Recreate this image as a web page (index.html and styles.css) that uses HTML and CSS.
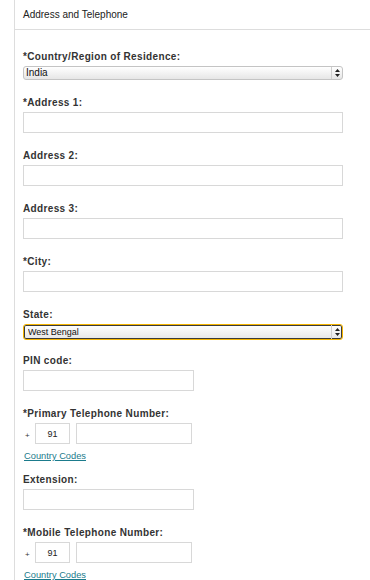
FILE: index.html
```html
<!DOCTYPE html>
<html lang="en">
<head>
    <meta charset="UTF-8">
    <meta name="viewport" content="width=device-width, initial-scale=1.0">
    <title>Address and Telephone</title>
    <link rel="stylesheet" href="styles.css">
</head>
<body>

    <div class="panel">
        <div class="panel-head">Address and Telephone</div>

        <form class="address-form">
            <div class="field">
                <label>*Country/Region of Residence:</label>
                <div class="select-box">
                    <select><option>India</option></select>
                    <span class="select-arrows">
                        <svg width="5" height="8" viewBox="0 0 5 8"><path d="M2.5 0L5 3H0z M0 5h5L2.5 8z" fill="#222"/></svg>
                    </span>
                </div>
            </div>

            <div class="field">
                <label>*Address 1:</label>
                <input type="text" class="text-input">
            </div>

            <div class="field">
                <label>Address 2:</label>
                <input type="text" class="text-input">
            </div>

            <div class="field">
                <label>Address 3:</label>
                <input type="text" class="text-input">
            </div>

            <div class="field">
                <label>*City:</label>
                <input type="text" class="text-input">
            </div>

            <div class="field state-field">
                <label>State:</label>
                <div class="select-box focused">
                    <select class="small"><option>West Bengal</option></select>
                    <span class="select-arrows">
                        <svg width="5" height="8" viewBox="0 0 5 8"><path d="M2.5 0L5 3H0z M0 5h5L2.5 8z" fill="#222"/></svg>
                    </span>
                </div>
            </div>

            <div class="field">
                <label>PIN code:</label>
                <input type="text" class="text-input short">
            </div>

            <div class="field with-link">
                <label>*Primary Telephone Number:</label>
                <div class="phone-row">
                    <span class="plus">+</span>
                    <input type="text" class="text-input code" value="91">
                    <input type="text" class="text-input number">
                </div>
                <a href="#" class="codes-link">Country Codes</a>
            </div>

            <div class="field">
                <label>Extension:</label>
                <input type="text" class="text-input short">
            </div>

            <div class="field with-link">
                <label>*Mobile Telephone Number:</label>
                <div class="phone-row">
                    <span class="plus">+</span>
                    <input type="text" class="text-input code" value="91">
                    <input type="text" class="text-input number">
                </div>
                <a href="#" class="codes-link">Country Codes</a>
            </div>
        </form>
    </div>

</body>
</html>
```

FILE: styles.css
```css
*{
    box-sizing: border-box;
}
body{
    margin: 0;
    background: #fff;
    font-family: "Liberation Sans", Arial, sans-serif;
    color: #333;
}
.panel{
    margin-left: 14px;
    border-left: 1px solid #ddd;
    min-height: 100vh;
}
.panel-head{
    padding: 9px 8px 8px;
    line-height: 12px;
    font-size: 10px;
    color: #222;
    border-bottom: 1px solid #ddd;
}
.address-form{
    padding: 21px 8px 0;
}
.field{
    margin-bottom: 17px;
}
.field.state-field{
    margin-bottom: 15px;
}
.field.with-link{
    margin-bottom: 12px;
}
.field label{
    display: block;
    font-size: 10px;
    font-weight: bold;
    letter-spacing: 0.35px;
    line-height: 12px;
    margin-bottom: 3px;
    color: #333;
}
.text-input{
    display: block;
    width: 320px;
    height: 21px;
    border: 1px solid #d8d8d8;
    background: #fff;
    font-family: "Liberation Sans", Arial, sans-serif;
    font-size: 9px;
    color: #222;
    padding: 0 4px;
    outline: none;
}
.text-input.short{
    width: 171px;
}

/* select boxes */
.select-box{
    display: flex;
    width: 320px;
    height: 14px;
    border: 1px solid #c4c4c4;
    border-radius: 3px;
    background: linear-gradient(#ffffff, #e6e6e6);
}
.select-box select{
    flex: 1;
    appearance: none;
    -webkit-appearance: none;
    border: 0;
    background: transparent;
    font-family: "Liberation Sans", Arial, sans-serif;
    font-size: 10px;
    line-height: 12px;
    padding: 0 2px;
    color: #111;
    outline: none;
}
.select-box select.small{
    font-size: 9px;
    padding-left: 4px;
}
.select-arrows{
    width: 11px;
    border-left: 1px solid #cfcfcf;
    display: flex;
    align-items: center;
    justify-content: center;
}
.select-box.focused{
    height: 16px;
    border-color: #f4b400;
    box-shadow: inset 0 0 0 1px #3a3a3a;
}

/* phone */
.phone-row{
    display: flex;
    align-items: center;
}
.plus{
    width: 12px;
    padding-left: 2px;
    padding-top: 4px;
    font-size: 8px;
    color: #333;
}
.text-input.code{
    width: 35px;
    margin-right: 6px;
    text-align: center;
}
.text-input.number{
    width: 116px;
}
.codes-link{
    display: block;
    width: fit-content;
    margin-top: 6px;
    margin-left: 1px;
    font-size: 9.3px;
    line-height: 12px;
    color: #1b7b8c;
}
```
